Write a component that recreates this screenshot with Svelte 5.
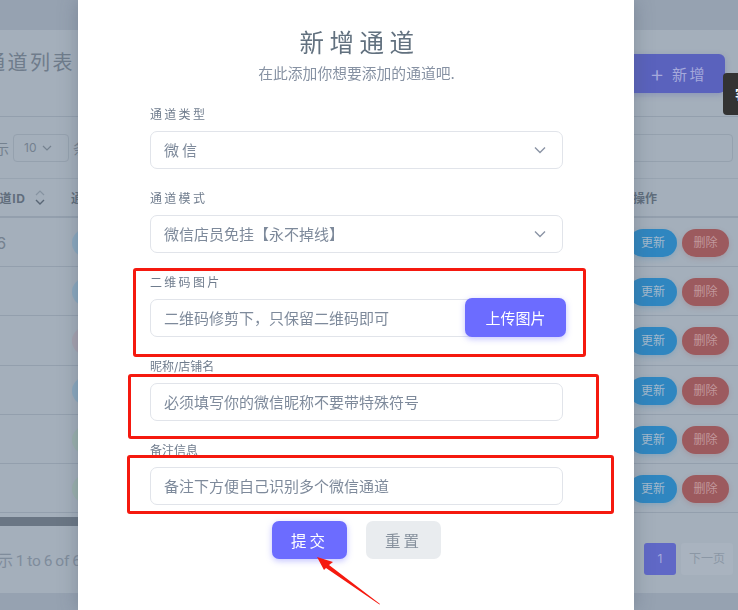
<script>
  const rows = [
    { id: '46', badge: '#8ba9c0' },
    { id: '', badge: '#8ba9c0' },
    { id: '', badge: '#a8a3b0' },
    { id: '', badge: '#8ba9c0' },
    { id: '', badge: '#9cb2ae' },
    { id: '', badge: '#9cb2ae' }
  ];
</script>

<div class="screen">
  <div class="page">
    <div class="card">
      <div class="card-head">
        <h2>通道列表</h2>
        <button class="add"><span class="plus">+</span>新增</button>
      </div>

      <div class="filters">
        <span>显示</span>
        <span class="size">10
          <svg width="10" height="6" viewBox="0 0 10 6"><path d="M1 1l4 4 4-4" fill="none" stroke="#75828f" stroke-width="1.2" /></svg>
        </span>
        <span>条</span>
        <span class="search"></span>
      </div>

      <div class="thead">
        <span class="th-id">通道ID
          <svg width="10" height="17" viewBox="0 0 10 17"><path d="M1 6l4-4 4 4" fill="none" stroke="#8693a1" stroke-width="1.2" /><path d="M1 11l4 4 4-4" fill="none" stroke="#596675" stroke-width="1.4" /></svg>
        </span>
        <span class="th-type">通道类型</span>
        <span class="th-ops">操作</span>
      </div>

      {#each rows as row}
        <div class="row">
          <span class="td-id">{row.id}</span>
          <span class="badge" style="background: {row.badge}"></span>
          <span class="ops">
            <span class="pill blue">更新</span>
            <span class="pill red">删除</span>
          </span>
        </div>
      {/each}

      <div class="scrollbar"><span class="thumb"></span></div>

      <div class="card-foot">
        <span class="count">显示 1 to 6 of 6</span>
        <span class="pager">
          <span class="current">1</span>
          <span class="next">下一页</span>
        </span>
      </div>
    </div>
    <div class="tip">客服</div>
  </div>

  <div class="modal">
    <h1>新增通道</h1>
    <p class="sub">在此添加你想要添加的通道吧.</p>

    <form>
      <div class="group">
        <div class="label">通道类型</div>
        <div class="select">
          <select class="wide"><option>微信</option></select>
          <svg width="14" height="8" viewBox="0 0 14 8"><path d="M2 1.5l5 5 5-5" fill="none" stroke="#8b94a5" stroke-width="1.4" /></svg>
        </div>
      </div>
      <div class="group">
        <div class="label">通道模式</div>
        <div class="select">
          <select><option>微信店员免挂【永不掉线】</option></select>
          <svg width="14" height="8" viewBox="0 0 14 8"><path d="M2 1.5l5 5 5-5" fill="none" stroke="#8b94a5" stroke-width="1.4" /></svg>
        </div>
      </div>
      <div class="group">
        <div class="label">二维码图片</div>
        <div class="upload">
          <input placeholder="二维码修剪下，只保留二维码即可" />
          <button type="button" class="primary">上传图片</button>
        </div>
      </div>
      <div class="group">
        <div class="label tight">昵称/店铺名</div>
        <input placeholder="必须填写你的微信昵称不要带特殊符号" />
      </div>
      <div class="group">
        <div class="label tight">备注信息</div>
        <input placeholder="备注下方便自己识别多个微信通道" />
      </div>
      <div class="actions">
        <button type="button" class="primary submit">提交</button>
        <button type="button" class="reset">重置</button>
      </div>
    </form>
  </div>

  <!-- red annotations drawn on top of the screenshot -->
  <span class="mark mark-1"></span>
  <span class="mark mark-2"></span>
  <span class="mark mark-3"></span>
  <svg class="arrow" width="738" height="610" viewBox="0 0 738 610">
    <polygon points="317,557 333,562 329,565 380,604 379.5,604.6 326,568 324,570" fill="#f5190f" />
  </svg>
</div>

<style>
  :global(body) {
    margin: 0;
    font-family: Inter, "Noto Sans CJK SC", sans-serif;
  }

  .screen {
    position: relative;
    width: 738px;
    height: 610px;
    overflow: hidden;
    background: #96a2b1;
  }

  .page {
    height: 610px;
    padding-top: 30px;
    box-sizing: border-box;
    filter: blur(0.5px);
    color: #74818f;
  }

  .card {
    height: 563px;
    margin-left: -40px;
    background: #a4afbb;
  }

  .card-head {
    height: 87px;
    box-sizing: border-box;
    padding: 23px 13px 0 25px;
    display: flex;
    justify-content: space-between;
    align-items: flex-start;
    border-bottom: 1px solid #939fad;
  }

  h2 {
    margin: 0;
    font-size: 20px;
    font-weight: 400;
    letter-spacing: 2.5px;
    line-height: 20px;
    color: #6f7c8b;
  }

  .add {
    width: 130px;
    height: 39px;
    margin-top: 1px;
    border: 0;
    border-radius: 6px;
    background: #5a62bd;
    color: #a5a9db;
    font: inherit;
    font-size: 15px;
    letter-spacing: 2.5px;
    text-align: right;
    padding: 0 18px 0 0;
    box-shadow: 0 2px 6px rgba(80, 90, 180, 0.3);
  }

  .plus {
    font-size: 23px;
    font-weight: 300;
    line-height: 15px;
    margin-right: 5px;
    vertical-align: -2px;
  }

  .filters {
    height: 62px;
    box-sizing: border-box;
    padding: 0 5px 0 21px;
    display: flex;
    align-items: center;
    gap: 4px;
    font-size: 14px;
    border-bottom: 1px solid #98a4b1;
  }

  .size {
    width: 56px;
    height: 28px;
    box-sizing: border-box;
    border: 1px solid #95a1ae;
    border-radius: 4px;
    display: flex;
    align-items: center;
    gap: 6px;
    padding-left: 10px;
    font-size: 12px;
  }

  .search {
    margin-left: auto;
    width: 150px;
    height: 28px;
    box-sizing: border-box;
    border: 1px solid #95a1ae;
    border-radius: 4px;
  }

  .thead {
    height: 39px;
    box-sizing: border-box;
    display: flex;
    align-items: center;
    padding: 0 0 1px 27px;
    font-size: 12px;
    letter-spacing: 0.6px;
    font-weight: 700;
    color: #606d7c;
    border-bottom: 2px solid #939fad;
  }

  .th-id {
    width: 84px;
    flex: none;
    display: flex;
    align-items: center;
    gap: 10px;
  }

  .th-ops {
    margin-left: auto;
    width: 105px;
    letter-spacing: 0;
  }

  .row {
    height: 49.2px;
    box-sizing: border-box;
    display: flex;
    align-items: center;
    padding: 2px 0 0 26px;
    border-bottom: 1px solid #939fad;
  }

  .td-id {
    width: 86px;
    flex: none;
    font-size: 16px;
  }

  .badge {
    width: 28px;
    height: 28px;
    border-radius: 50%;
  }

  .ops {
    margin-left: auto;
    padding-right: 9px;
    display: flex;
    gap: 5px;
  }

  .pill {
    height: 28px;
    line-height: 28px;
    border-radius: 14px;
    padding: 0 12px;
    font-size: 12px;
  }

  .blue {
    background: #2f86c0;
    color: #a3b9cc;
    box-shadow: 0 2px 5px rgba(47, 134, 192, 0.25);
  }

  .red {
    background: #9c5a5e;
    color: #c1989c;
    padding: 0 11.5px;
    box-shadow: 0 2px 5px rgba(156, 90, 94, 0.25);
  }

  .scrollbar {
    height: 9px;
    margin-top: 4px;
  }

  .thumb {
    display: block;
    width: 660px;
    height: 9px;
    background: #6a7684;
  }

  .card-foot {
    height: 66px;
    box-sizing: border-box;
    padding: 0 5px 0 22px;
    display: flex;
    justify-content: space-between;
    align-items: center;
  }

  .count {
    font-family: Roboto, "Noto Sans CJK SC", sans-serif;
    font-size: 15.5px;
    word-spacing: -1.1px;
    color: #7f8c9b;
  }

  .pager {
    display: flex;
    gap: 5px;
    font-size: 12px;
  }

  .current {
    width: 32px;
    height: 32px;
    line-height: 32px;
    text-align: center;
    border-radius: 3px;
    background: #6068c6;
    color: #a5abdc;
  }

  .next {
    width: 52px;
    height: 32px;
    line-height: 32px;
    text-align: center;
    border-radius: 3px;
    background: #a9b3bf;
    color: #8b97a5;
  }

  .tip {
    position: absolute;
    left: 723px;
    top: 73px;
    width: 60px;
    height: 42px;
    line-height: 42px;
    padding-left: 12px;
    box-sizing: border-box;
    border-radius: 4px;
    background: #333;
    color: #fff;
    font-size: 13px;
    font-weight: 700;
    white-space: nowrap;
  }

  .modal {
    position: absolute;
    left: 78px;
    top: 0;
    width: 556px;
    height: 610px;
    box-sizing: border-box;
    padding: 26px 71px 0 72px;
    background: #fff;
    box-shadow: 0 0 18px rgba(70, 80, 100, 0.35);
    filter: blur(0.3px);
  }

  h1 {
    margin: 0;
    padding-left: 6px;
    font-size: 24.5px;
    font-weight: 400;
    line-height: 34px;
    letter-spacing: 5.5px;
    text-align: center;
    color: #62717f;
  }

  .sub {
    margin: 4px 0 0;
    font-size: 14.8px;
    line-height: 20px;
    text-align: center;
    color: #8792a3;
  }

  form {
    margin-top: 20px;
  }

  .group {
    height: 84px;
  }

  .label {
    height: 27px;
    line-height: 22px;
    font-size: 12px;
    letter-spacing: 2.3px;
    color: #6f7c8d;
  }

  .label.tight {
    letter-spacing: 0;
  }

  input,
  select {
    width: 100%;
    height: 38px;
    box-sizing: border-box;
    border: 1px solid #e1e4ea;
    border-radius: 7px;
    padding: 0 13px;
    background: #fff;
    font: inherit;
    font-size: 15px;
    color: #7e8a9b;
    appearance: none;
    outline: none;
  }

  input::placeholder {
    color: #7e8a9b;
    opacity: 1;
  }

  select.wide {
    letter-spacing: 3px;
  }

  .select {
    position: relative;
  }

  .select svg {
    position: absolute;
    right: 16px;
    top: 15px;
  }

  .upload {
    display: flex;
  }

  .upload input {
    flex: 1;
    min-width: 0;
  }

  button {
    font-family: inherit;
    cursor: pointer;
  }

  .primary {
    border: 0;
    border-radius: 7px;
    background: #6c6cff;
    color: #fff;
    font-size: 15px;
    box-shadow: 0 2px 6px rgba(108, 108, 255, 0.4);
  }

  .upload .primary {
    flex: none;
    width: 101px;
    height: 39px;
    margin: -1px -3px 0 -98px;
    position: relative;
  }

  .actions {
    display: flex;
    justify-content: center;
    gap: 19px;
    margin-top: -3px;
  }

  .submit,
  .reset {
    width: 75px;
    height: 38px;
    font-size: 15.5px;
    letter-spacing: 3px;
    border-radius: 7px;
  }

  .reset {
    border: 0;
    background: #e9ecef;
    color: #87919d;
  }

  .mark {
    position: absolute;
    box-sizing: border-box;
    border: 3px solid #f5190f;
    border-radius: 3px;
    pointer-events: none;
  }

  .mark-1 {
    left: 133px;
    top: 268px;
    width: 453px;
    height: 89px;
  }

  .mark-2 {
    left: 128px;
    top: 374px;
    width: 471px;
    height: 65px;
  }

  .mark-3 {
    left: 127px;
    top: 455px;
    width: 487px;
    height: 59px;
  }

  .arrow {
    position: absolute;
    left: 0;
    top: 0;
    pointer-events: none;
  }
</style>
